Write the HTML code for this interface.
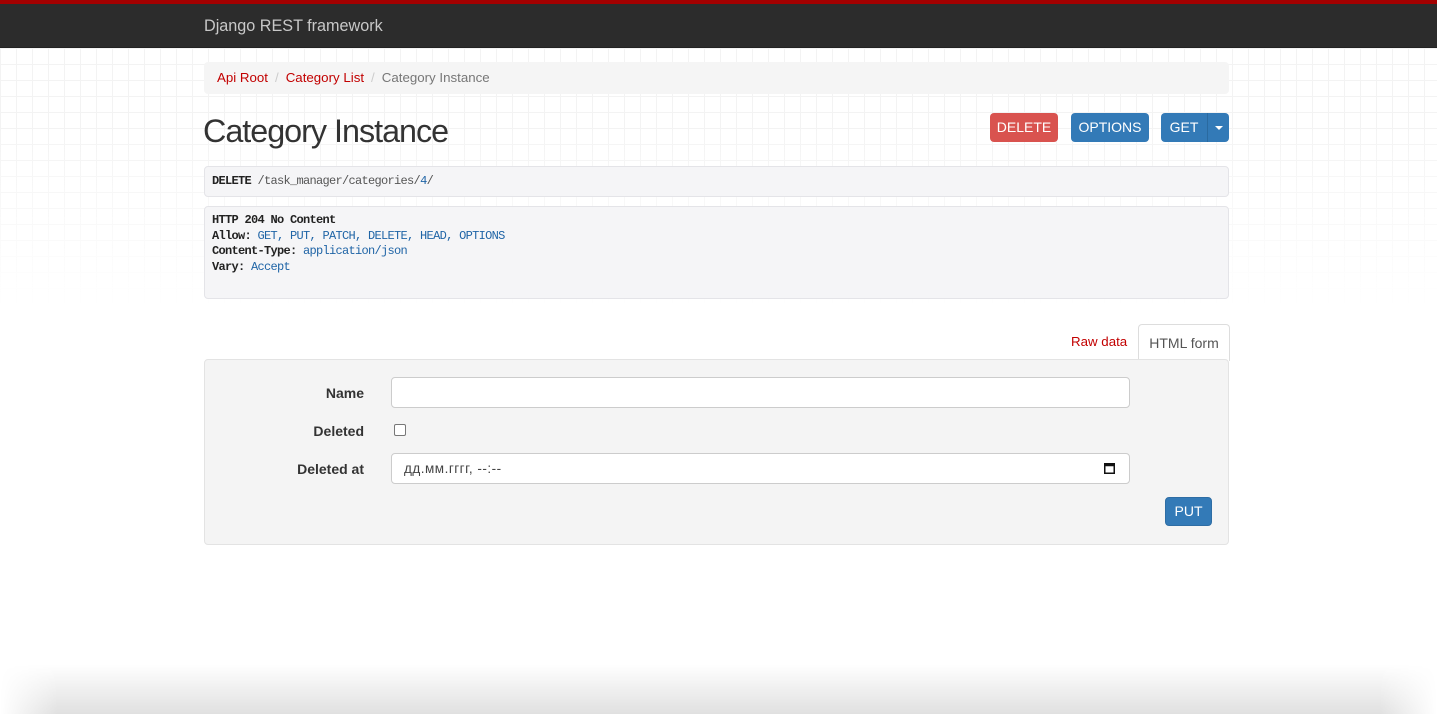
<!DOCTYPE html>
<html><head><meta charset="utf-8"><style>
*{box-sizing:border-box}
html,body{margin:0;width:1437px;height:714px;overflow:hidden}
body{font-family:"Liberation Sans",Arial,sans-serif;font-size:14px;color:#333;background:#fff;position:relative}
.grid{position:absolute;left:0;top:48px;width:1437px;height:260px;background-image:linear-gradient(#eee 1px,transparent 1px),linear-gradient(90deg,#eee 1px,transparent 1px);background-size:16px 16px;-webkit-mask-image:linear-gradient(#000 30%,transparent);mask-image:linear-gradient(#000 30%,transparent);opacity:.7}
.top{position:absolute;left:0;top:0;width:1437px;height:4px;background:#a30000}
.nav{position:absolute;left:0;top:4px;width:1437px;height:44px;background:#2c2c2c;border-bottom:1px solid #222}
.brand{position:absolute;left:204px;top:13px;font-size:16.2px;color:#c8c8c8}
.abs{position:absolute}
.bc{left:204px;top:62px;width:1025px;height:32px;background:#f5f5f5;border-radius:4px;padding:8px 13px;font-size:13.3px}
.bc a{color:#c20000}.bc .s{color:#ccc;padding:0 7px}.bc .c{color:#777}
h1{position:absolute;left:203px;top:113px;margin:0;font-size:32.3px;font-weight:300;color:#333;letter-spacing:-1px}
.btn{position:absolute;top:113px;height:29px;color:#fff;font-size:14px;line-height:29px;text-align:center;border-radius:4px}
.pre{position:absolute;left:204px;width:1025px;background:#f5f5f7;border:1px solid #e4e4e8;border-radius:4px;font-family:"Liberation Mono",monospace;font-size:12px;letter-spacing:-0.7px;padding:7px 7px;line-height:15.5px}
.pre b{color:#222}.lit{color:#1f64a6}
.well{position:absolute;left:204px;top:359px;width:1025px;height:186px;background:#f4f4f4;border:1px solid #e3e3e3;border-radius:4px}
.lbl{position:absolute;right:1073px;font-weight:bold;font-size:14px;color:#333}
.inp{position:absolute;left:391px;width:739px;height:31px;background:#fff;border:1px solid #ccc;border-radius:4px}
.sh{position:absolute;left:0;top:664px;width:1437px;height:50px;background:linear-gradient(rgba(0,0,0,0),rgba(0,0,0,.12));-webkit-mask-image:linear-gradient(90deg,transparent,#000 4%,#000 96%,transparent);mask-image:linear-gradient(90deg,transparent,#000 4%,#000 96%,transparent)}
</style></head><body>
<div class="grid"></div>
<div class="top"></div>
<div class="nav"><div class="brand">Django REST framework</div></div>
<div class="abs bc"><a>Api Root</a><span class="s">/</span><a>Category List</a><span class="s">/</span><span class="c">Category Instance</span></div>
<h1>Category Instance</h1>
<div class="btn" style="left:990px;width:68px;background:#d9534f">DELETE</div>
<div class="btn" style="left:1071px;width:78px;background:#337ab7">OPTIONS</div>
<div class="btn" style="left:1161px;width:68px;background:#337ab7"><span style="position:absolute;left:0;width:46px;text-align:center">GET</span><span style="position:absolute;left:46px;top:0;width:1px;height:29px;background:#2a6aa0"></span><span style="position:absolute;left:54px;top:13px;border-left:4px solid transparent;border-right:4px solid transparent;border-top:4px solid #fff"></span></div>
<div class="pre" style="top:166px;height:31px;padding-top:7px"><b>DELETE</b> <span style="color:#555">/task_manager/categories/</span><span class="lit">4</span><span style="color:#555">/</span></div>
<div class="pre" style="top:206px;height:93px;padding-top:6px"><b>HTTP 204 No Content</b><br><b>Allow:</b> <span class="lit">GET, PUT, PATCH, DELETE, HEAD, OPTIONS</span><br><b>Content-Type:</b> <span class="lit">application/json</span><br><b>Vary:</b> <span class="lit">Accept</span></div>
<div class="abs" style="left:1071px;top:334px;color:#c20000;font-size:13.3px">Raw data</div>
<div class="abs" style="left:1138px;top:324px;width:92px;height:37px;background:#fff;border:1px solid #ddd;border-bottom:none;border-radius:4px 4px 0 0;padding-top:10px;text-align:center;color:#555">HTML form</div>
<div class="well"></div>
<div class="lbl" style="top:385px">Name</div>
<div class="inp" style="top:377px"></div>
<div class="lbl" style="top:423px">Deleted</div>
<div class="abs" style="left:394px;top:424px;width:12px;height:12px;border:1px solid #777;border-radius:2px;background:#fff"></div>
<div class="lbl" style="top:461px">Deleted at</div>
<div class="inp" style="top:453px;padding:7px 12px;font-size:13.5px;letter-spacing:0.5px;color:#444">дд.мм.гггг, --:--
<svg style="position:absolute;right:14px;top:8px" width="11" height="12" viewBox="0 0 11 12"><rect x="0.75" y="1.75" width="9.5" height="9.5" fill="none" stroke="#111" stroke-width="1.5"/><rect x="0.75" y="1.75" width="9.5" height="2.5" fill="#111"/></svg></div>
<div class="abs" style="left:1165px;top:497px;width:47px;height:29px;background:#337ab7;border:1px solid #2e6da4;border-radius:4px;color:#fff;text-align:center;line-height:27px">PUT</div>
<div class="sh"></div>
</body></html>
